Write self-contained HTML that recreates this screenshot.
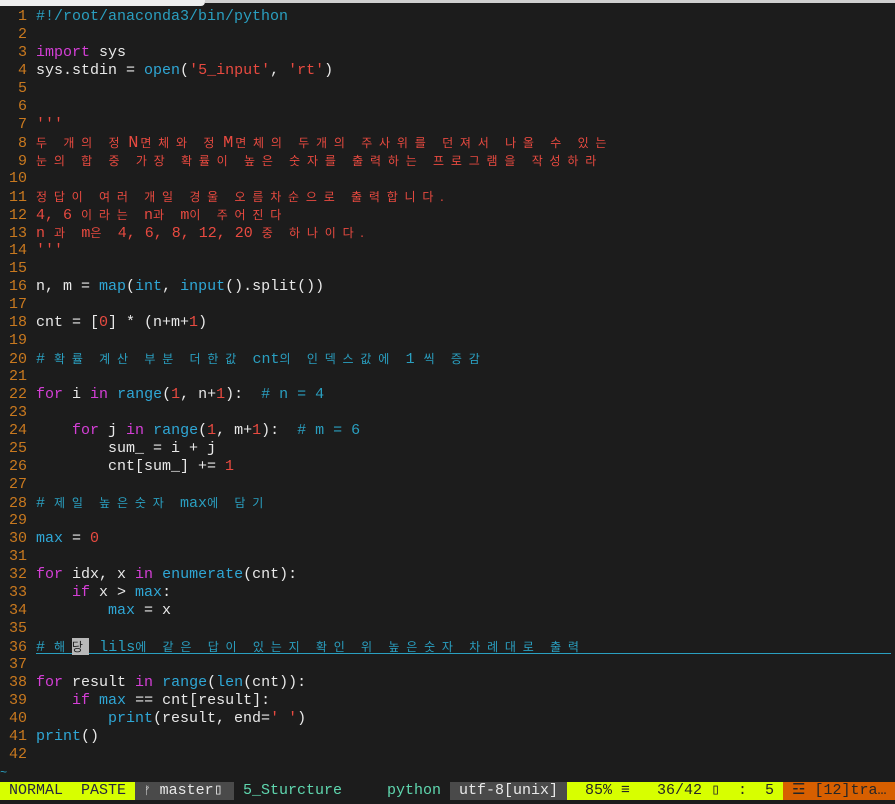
<!DOCTYPE html>
<html><head><meta charset="utf-8"><style>
body{margin:0;background:#1c1c1c;width:895px;height:804px;overflow:hidden;position:relative;font-family:"Liberation Mono","Noto Sans CJK KR",monospace;font-size:15px;color:#e8e8e8}
.t1{position:absolute;left:0;top:0;width:205px;height:6px;background:#ededed;border-radius:0 0 4px 0}
.t2{position:absolute;left:205px;top:0;width:690px;height:3px;background:#cfcfcf}
.l{position:absolute;left:0;height:18px;line-height:18px;white-space:pre}
.n{display:inline-block;width:27px;text-align:right;color:#c9791f;margin-right:9px}
.k{font-family:"Noto Sans CJK KR",sans-serif;font-size:12px;letter-spacing:6.8px}
.w{display:inline-block;width:14px;text-align:center;font-size:17px}
.c{color:#2a9fc0}.kw{color:#d43fd6}.b{color:#2fa7d6}.s{color:#e84a40}.num{color:#e84a40}
.sb{position:absolute;top:782px;height:18px;line-height:18px;white-space:pre;font-size:15px}
</style></head><body>
<div class="t1"></div><div class="t2"></div>
<div class="l" style="top:8px"><span class="n">1</span><span class="c">#!/root/anaconda3/bin/python</span></div>
<div class="l" style="top:26px"><span class="n">2</span></div>
<div class="l" style="top:44px"><span class="n">3</span><span class="kw">import</span> sys</div>
<div class="l" style="top:62px"><span class="n">4</span>sys.stdin = <span class="b">open</span>(<span class="s">'5_input'</span>, <span class="s">'rt'</span>)</div>
<div class="l" style="top:80px"><span class="n">5</span></div>
<div class="l" style="top:98px"><span class="n">6</span></div>
<div class="l" style="top:116px"><span class="n">7</span><span class="s">'''</span></div>
<div class="l s" style="top:134px"><span class="n">8</span><span class="k">두 개의 정</span><span class="w">N</span><span class="k">면체와 정</span><span class="w">M</span><span class="k">면체의 두개의 주사위를 던져서 나올 수 있는</span></div>
<div class="l s" style="top:152px"><span class="n">9</span><span class="k">눈의 합 중 가장 확률이 높은 숫자를 출력하는 프로그램을 작성하라</span></div>
<div class="l" style="top:170px"><span class="n">10</span></div>
<div class="l s" style="top:188px"><span class="n">11</span><span class="k">정답이 여러 개일 경울 오름차순으로 출력합니다.</span></div>
<div class="l s" style="top:206px"><span class="n">12</span>4, 6 <span class="k">이라는 </span>n<span class="k">과 </span>m<span class="k">이 주어진다</span></div>
<div class="l s" style="top:224px"><span class="n">13</span>n <span class="k">과 </span>m<span class="k">은 </span>4, 6, 8, 12, 20 <span class="k">중 하나이다.</span></div>
<div class="l" style="top:242px"><span class="n">14</span><span class="s">'''</span></div>
<div class="l" style="top:260px"><span class="n">15</span></div>
<div class="l" style="top:278px"><span class="n">16</span>n, m = <span class="b">map</span>(<span class="b">int</span>, <span class="b">input</span>().split())</div>
<div class="l" style="top:296px"><span class="n">17</span></div>
<div class="l" style="top:314px"><span class="n">18</span>cnt = [<span class="num">0</span>] * (n+m+<span class="num">1</span>)</div>
<div class="l" style="top:332px"><span class="n">19</span></div>
<div class="l c" style="top:350px"><span class="n">20</span># <span class="k">확률 계산 부분 더한값 </span>cnt<span class="k">의 인덱스값에 </span>1 <span class="k">씩 증감</span></div>
<div class="l" style="top:368px"><span class="n">21</span></div>
<div class="l" style="top:386px"><span class="n">22</span><span class="kw">for</span> i <span class="kw">in</span> <span class="b">range</span>(<span class="num">1</span>, n+<span class="num">1</span>):  <span class="c"># n = 4</span></div>
<div class="l" style="top:404px"><span class="n">23</span></div>
<div class="l" style="top:422px"><span class="n">24</span>    <span class="kw">for</span> j <span class="kw">in</span> <span class="b">range</span>(<span class="num">1</span>, m+<span class="num">1</span>):  <span class="c"># m = 6</span></div>
<div class="l" style="top:440px"><span class="n">25</span>        sum_ = i + j</div>
<div class="l" style="top:458px"><span class="n">26</span>        cnt[sum_] += <span class="num">1</span></div>
<div class="l" style="top:476px"><span class="n">27</span></div>
<div class="l c" style="top:494px"><span class="n">28</span># <span class="k">제일 높은숫자 </span>max<span class="k">에 담기</span></div>
<div class="l" style="top:512px"><span class="n">29</span></div>
<div class="l" style="top:530px"><span class="n">30</span><span class="b">max</span> = <span class="num">0</span></div>
<div class="l" style="top:548px"><span class="n">31</span></div>
<div class="l" style="top:566px"><span class="n">32</span><span class="kw">for</span> idx, x <span class="kw">in</span> <span class="b">enumerate</span>(cnt):</div>
<div class="l" style="top:584px"><span class="n">33</span>    <span class="kw">if</span> x &gt; <span class="b">max</span>:</div>
<div class="l" style="top:602px"><span class="n">34</span>        <span class="b">max</span> = x</div>
<div class="l" style="top:620px"><span class="n">35</span></div>
<div style="position:absolute;left:36px;top:653px;width:855px;height:1px;background:#2a9fc0"></div>
<div style="position:absolute;left:72px;top:638px;width:17px;height:17px;background:#b8b8b8"></div>
<div class="l c" style="top:638px"><span class="n">36</span># <span class="k">해</span><span class="k" style="color:#1c1c1c">당</span><span class="k"> </span>lils<span class="k">에 같은 답이 있는지 확인 위 높은숫자 차례대로 출력</span></div>
<div class="l" style="top:656px"><span class="n">37</span></div>
<div class="l" style="top:674px"><span class="n">38</span><span class="kw">for</span> result <span class="kw">in</span> <span class="b">range</span>(<span class="b">len</span>(cnt)):</div>
<div class="l" style="top:692px"><span class="n">39</span>    <span class="kw">if</span> <span class="b">max</span> == cnt[result]:</div>
<div class="l" style="top:710px"><span class="n">40</span>        <span class="b">print</span>(result, end=<span class="s">' '</span>)</div>
<div class="l" style="top:728px"><span class="n">41</span><span class="b">print</span>()</div>
<div class="l" style="top:746px"><span class="n">42</span></div>
<div class="l c" style="top:764px;font-size:12px">~</div>
<div class="sb" style="left:0;width:135px;background:#d7ff00;color:#262640"> NORMAL  PASTE </div>
<div class="sb" style="left:135px;width:99px;background:#4a4a4a;color:#e8e8e8"> <span style="font-size:11px">ᚠ</span> master▯</div>
<div class="sb" style="left:234px;width:216px;color:#5fd7af"> 5_Sturcture     python </div>
<div class="sb" style="left:450px;width:117px;background:#4a4a4a;color:#e8e8e8"> utf-8[unix] </div>
<div class="sb" style="left:567px;width:216px;background:#d7ff00;color:#262626"><span style="position:absolute;left:18px">85% ≡</span><span style="position:absolute;left:90px">36/42 ▯</span><span style="position:absolute;left:171px">:</span><span style="position:absolute;left:198px">5</span></div>
<div class="sb" style="left:783px;width:112px;background:#d75f00;color:#262626"> ☲ [12]tra…</div>
</body></html>
